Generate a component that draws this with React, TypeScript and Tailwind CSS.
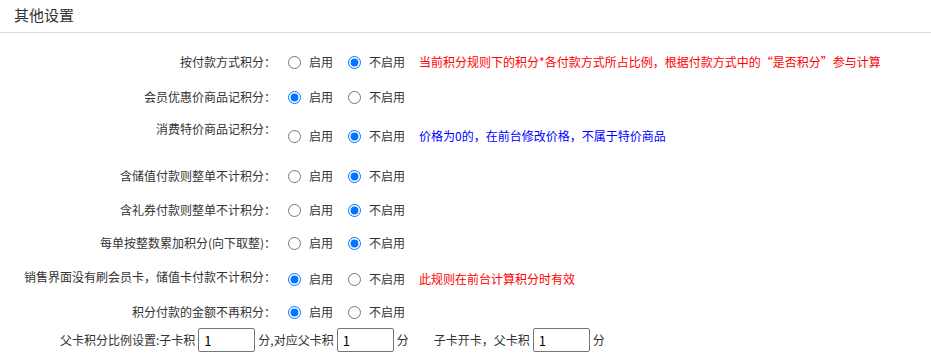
import React from 'react';

interface RowProps {
  label: string;
  enabled: boolean;
  name: string;
  note?: string;
  noteColor?: string;
  height: string;
  labelShift?: string;
}

function SettingRow({ label, enabled, name, note, noteColor, height, labelShift }: RowProps) {
  return (
    <div className={`flex items-center ${height}`}>
      <div className={`w-[276px] shrink-0 text-right ${labelShift ?? ''}`}>{label}</div>
      <label className="ml-[12px] flex items-center">
        <input type="radio" name={name} defaultChecked={enabled} className="h-[13px] w-[13px]" />
        <span className="ml-[8px]">启用</span>
      </label>
      <label className="ml-[15px] flex items-center">
        <input type="radio" name={name} defaultChecked={!enabled} className="h-[13px] w-[13px]" />
        <span className="ml-[8px]">不启用</span>
      </label>
      {note && <span className={`ml-[14px] ${noteColor}`}>{note}</span>}
    </div>
  );
}

const rows: RowProps[] = [
  {
    label: '按付款方式积分：',
    enabled: false,
    name: 'r1',
    note: '当前积分规则下的积分*各付款方式所占比例，根据付款方式中的“是否积分”参与计算',
    noteColor: 'text-[#ff0000]',
    height: 'h-[36px]',
  },
  { label: '会员优惠价商品记积分：', enabled: true, name: 'r2', height: 'h-[34px]' },
  {
    label: '消费特价商品记积分：',
    enabled: false,
    name: 'r3',
    note: '价格为0的，在前台修改价格，不属于特价商品',
    noteColor: 'text-[#0000ff]',
    height: 'h-[44px]',
    labelShift: 'mb-[15px]',
  },
  { label: '含储值付款则整单不计积分：', enabled: false, name: 'r4', height: 'h-[36px]' },
  { label: '含礼券付款则整单不计积分：', enabled: false, name: 'r5', height: 'h-[32px]' },
  { label: '每单按整数累加积分(向下取整)：', enabled: false, name: 'r6', height: 'h-[34px]' },
  {
    label: '销售界面没有刷会员卡，储值卡付款不计积分：',
    enabled: true,
    name: 'r7',
    note: '此规则在前台计算积分时有效',
    noteColor: 'text-[#ff0000]',
    height: 'h-[38px]',
    labelShift: 'mb-[4px]',
  },
  { label: '积分付款的金额不再积分：', enabled: true, name: 'r8', height: 'h-[28px]' },
];

function NumInput() {
  return (
    <input
      type="text"
      defaultValue="1"
      className="mx-[3px] h-[24px] w-[57px] rounded-[2px] border border-[#767676] bg-white px-[5px] text-[13px] text-black outline-none"
    />
  );
}

export default function App() {
  return (
    <div className="h-[357px] w-[931px] bg-white text-[12px] text-[#333] font-['Noto_Sans_CJK_SC',sans-serif]">
      <div className="flex h-[33px] items-center border-b border-[#dddddd] pl-[14px] pb-[1px] text-[15px] text-[#333]">
        其他设置
      </div>
      <div className="pt-[11px]">
        {rows.map((r) => (
          <SettingRow key={r.name} {...r} />
        ))}
        <div className="flex h-[28px] items-center pl-[60px]">
          <span>父卡积分比例设置:子卡积</span>
          <NumInput />
          <span>分,对应父卡积</span>
          <NumInput />
          <span>分</span>
          <span className="ml-[25px]">子卡开卡，父卡积</span>
          <NumInput />
          <span>分</span>
        </div>
      </div>
    </div>
  );
}
